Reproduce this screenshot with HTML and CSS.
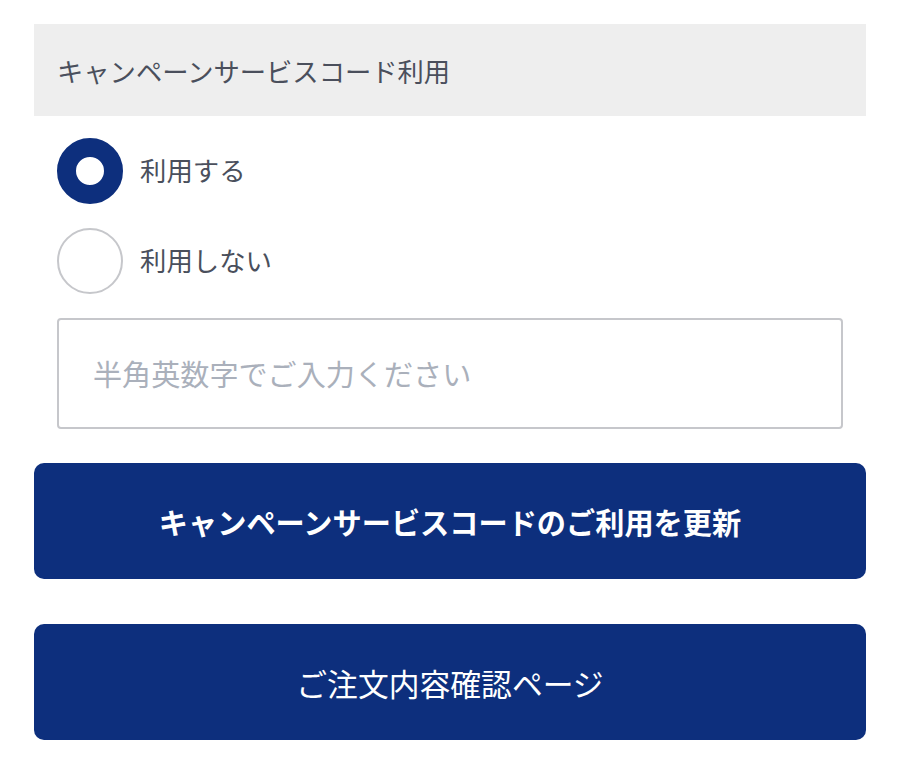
FILE: index.html
```html
<!DOCTYPE html>
<html lang="ja">
<head>
  <meta charset="UTF-8">
  <title>キャンペーンサービスコード利用</title>
  <link rel="stylesheet" href="styles.css">
</head>
<body>
  <div class="campaign">
    <div class="campaign-head">キャンペーンサービスコード利用</div>
    <div class="campaign-body">
      <label class="radio"><input type="radio" name="use" checked><span class="mark"></span><span class="radio-text">利用する</span></label>
      <label class="radio"><input type="radio" name="use"><span class="mark"></span><span class="radio-text">利用しない</span></label>
      <input class="code-input" type="text" placeholder="半角英数字でご入力ください">
    </div>
    <button class="btn btn-bold" type="button">キャンペーンサービスコードのご利用を更新</button>
    <button class="btn" type="button">ご注文内容確認ページ</button>
  </div>
</body>
</html>
```

FILE: styles.css
```css
body { margin: 0; background: #fff; font-family: "Noto Sans CJK JP", "Noto Sans", sans-serif; color: #4a4f5c; }
.campaign { padding: 24px 34px 0; }
.campaign-head { height: 92px; display: flex; align-items: center; padding-left: 23px; background: #eeeeee; font-size: 26.3px; }
.campaign-body { padding: 22px 23px 0; }
.radio { display: flex; align-items: center; height: 66px; margin-bottom: 24px; cursor: pointer; }
.radio input { display: none; }
.mark { width: 66px; height: 66px; box-sizing: border-box; border-radius: 50%; border: 2px solid #c6c7cb; background: #fff; flex-shrink: 0; }
.radio input:checked + .mark { border: 19px solid #0d2f7d; }
.radio-text { margin-left: 17px; margin-bottom: 3px; font-size: 26.4px; }
.code-input { display: block; width: 100%; height: 111px; box-sizing: border-box; margin-top: 1px; padding: 0 34px 2px; border: 2px solid #c6c7cb; border-radius: 4px; font-family: inherit; font-size: 29.1px; color: #4a4f5c; outline: none; }
.code-input::placeholder { color: #aab0bb; }
.btn { display: block; width: 100%; height: 116px; margin-top: 34px; border: 0; border-radius: 10px; background: #0d2f7d; color: #fff; font-family: inherit; font-size: 30.8px; cursor: pointer; }
.btn-bold { font-weight: bold; font-size: 29.2px; }
.btn + .btn { margin-top: 45px; }
```
